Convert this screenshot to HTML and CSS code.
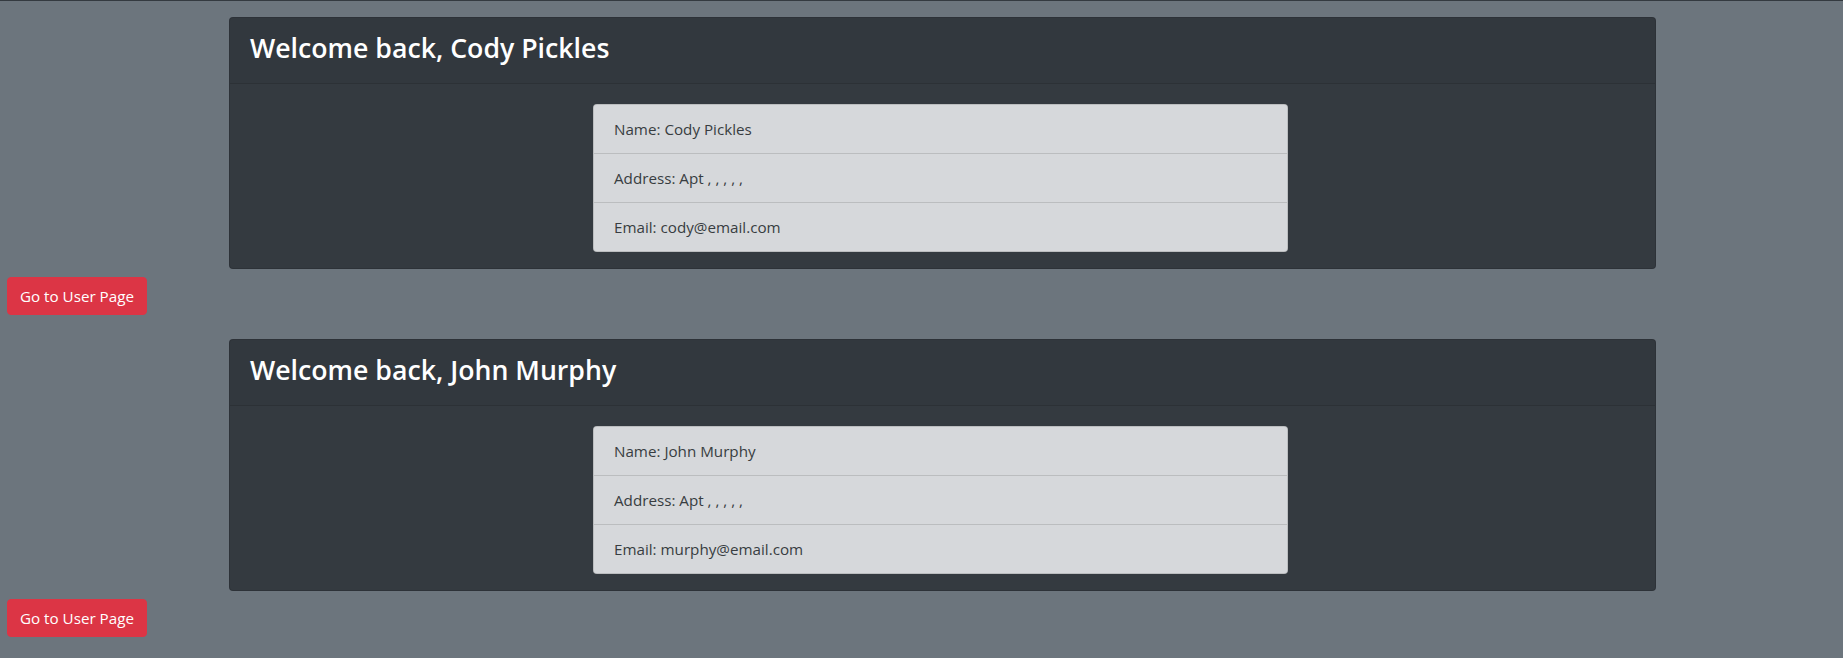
FILE: index.html
```html
<!DOCTYPE html>
<html lang="en">
<head>
<meta charset="utf-8">
<title>Welcome back</title>
<link rel="stylesheet" href="styles.css">
</head>
<body>
<div class="topline"></div>
<main class="page">
  <section class="card">
    <div class="card-header"><h3 class="card-title">Welcome back, Cody Pickles</h3></div>
    <div class="card-body">
      <ul class="list-group">
        <li class="list-item">Name: Cody Pickles</li>
        <li class="list-item">Address: Apt , , , , ,</li>
        <li class="list-item">Email: cody@email.com</li>
      </ul>
    </div>
  </section>
  <button class="btn-danger" type="button">Go to User Page</button>

  <section class="card card-next">
    <div class="card-header"><h3 class="card-title">Welcome back, John Murphy</h3></div>
    <div class="card-body">
      <ul class="list-group">
        <li class="list-item">Name: John Murphy</li>
        <li class="list-item">Address: Apt , , , , ,</li>
        <li class="list-item">Email: murphy@email.com</li>
      </ul>
    </div>
  </section>
  <button class="btn-danger" type="button">Go to User Page</button>
</main>
</body>
</html>
```

FILE: styles.css
```css
html, body {
  margin: 0;
  padding: 0;
}
body {
  background: #6c757d;
  font-family: "Segoe UI", "Open Sans", "Noto Sans", sans-serif;
  font-size: 15.2px;
  line-height: 24px;
  color: #212529;
  height: 658px;
  overflow: hidden;
}
.topline {
  height: 1px;
  background: #343a40;
}
.page {
  display: flex;
  flex-direction: column;
  align-items: flex-start;
}
.card {
  box-sizing: border-box;
  margin: 16px 0 0 229px;
  width: 1427px;
  background: #343a40;
  border: 1px solid rgba(0, 0, 0, 0.125);
  border-radius: 4px;
  color: #fff;
}
.card-next {
  margin-top: 24px;
}
.card-header {
  padding: 12px 20px;
  background: rgba(0, 0, 0, 0.03);
  border-bottom: 1px solid rgba(0, 0, 0, 0.125);
  border-radius: 3px 3px 0 0;
}
.card-title {
  margin: 0 0 8px;
  padding-top: 2px;
  font-size: 26.7px;
  line-height: 31px;
  font-weight: 600;
  color: #fff;
}
.card-body {
  padding: 20px 20px 16px;
}
.list-group {
  list-style: none;
  margin: 0 0 0 343px;
  padding: 0;
  width: 695px;
  box-sizing: border-box;
  border: 1px solid rgba(0, 0, 0, 0.125);
  border-radius: 4px;
  background: #d6d8db;
  overflow: hidden;
}
.list-item {
  padding: 12px 20px;
  color: #383d41;
  background: #d6d8db;
}
.list-item + .list-item {
  border-top: 1px solid rgba(0, 0, 0, 0.125);
}
.btn-danger {
  margin: 8px 0 0 7px;
  padding: 6px 12px;
  font-family: inherit;
  font-size: 15.2px;
  line-height: 24px;
  color: #fff;
  background: #dc3545;
  border: 1px solid #dc3545;
  border-radius: 4px;
  cursor: pointer;
}
```
